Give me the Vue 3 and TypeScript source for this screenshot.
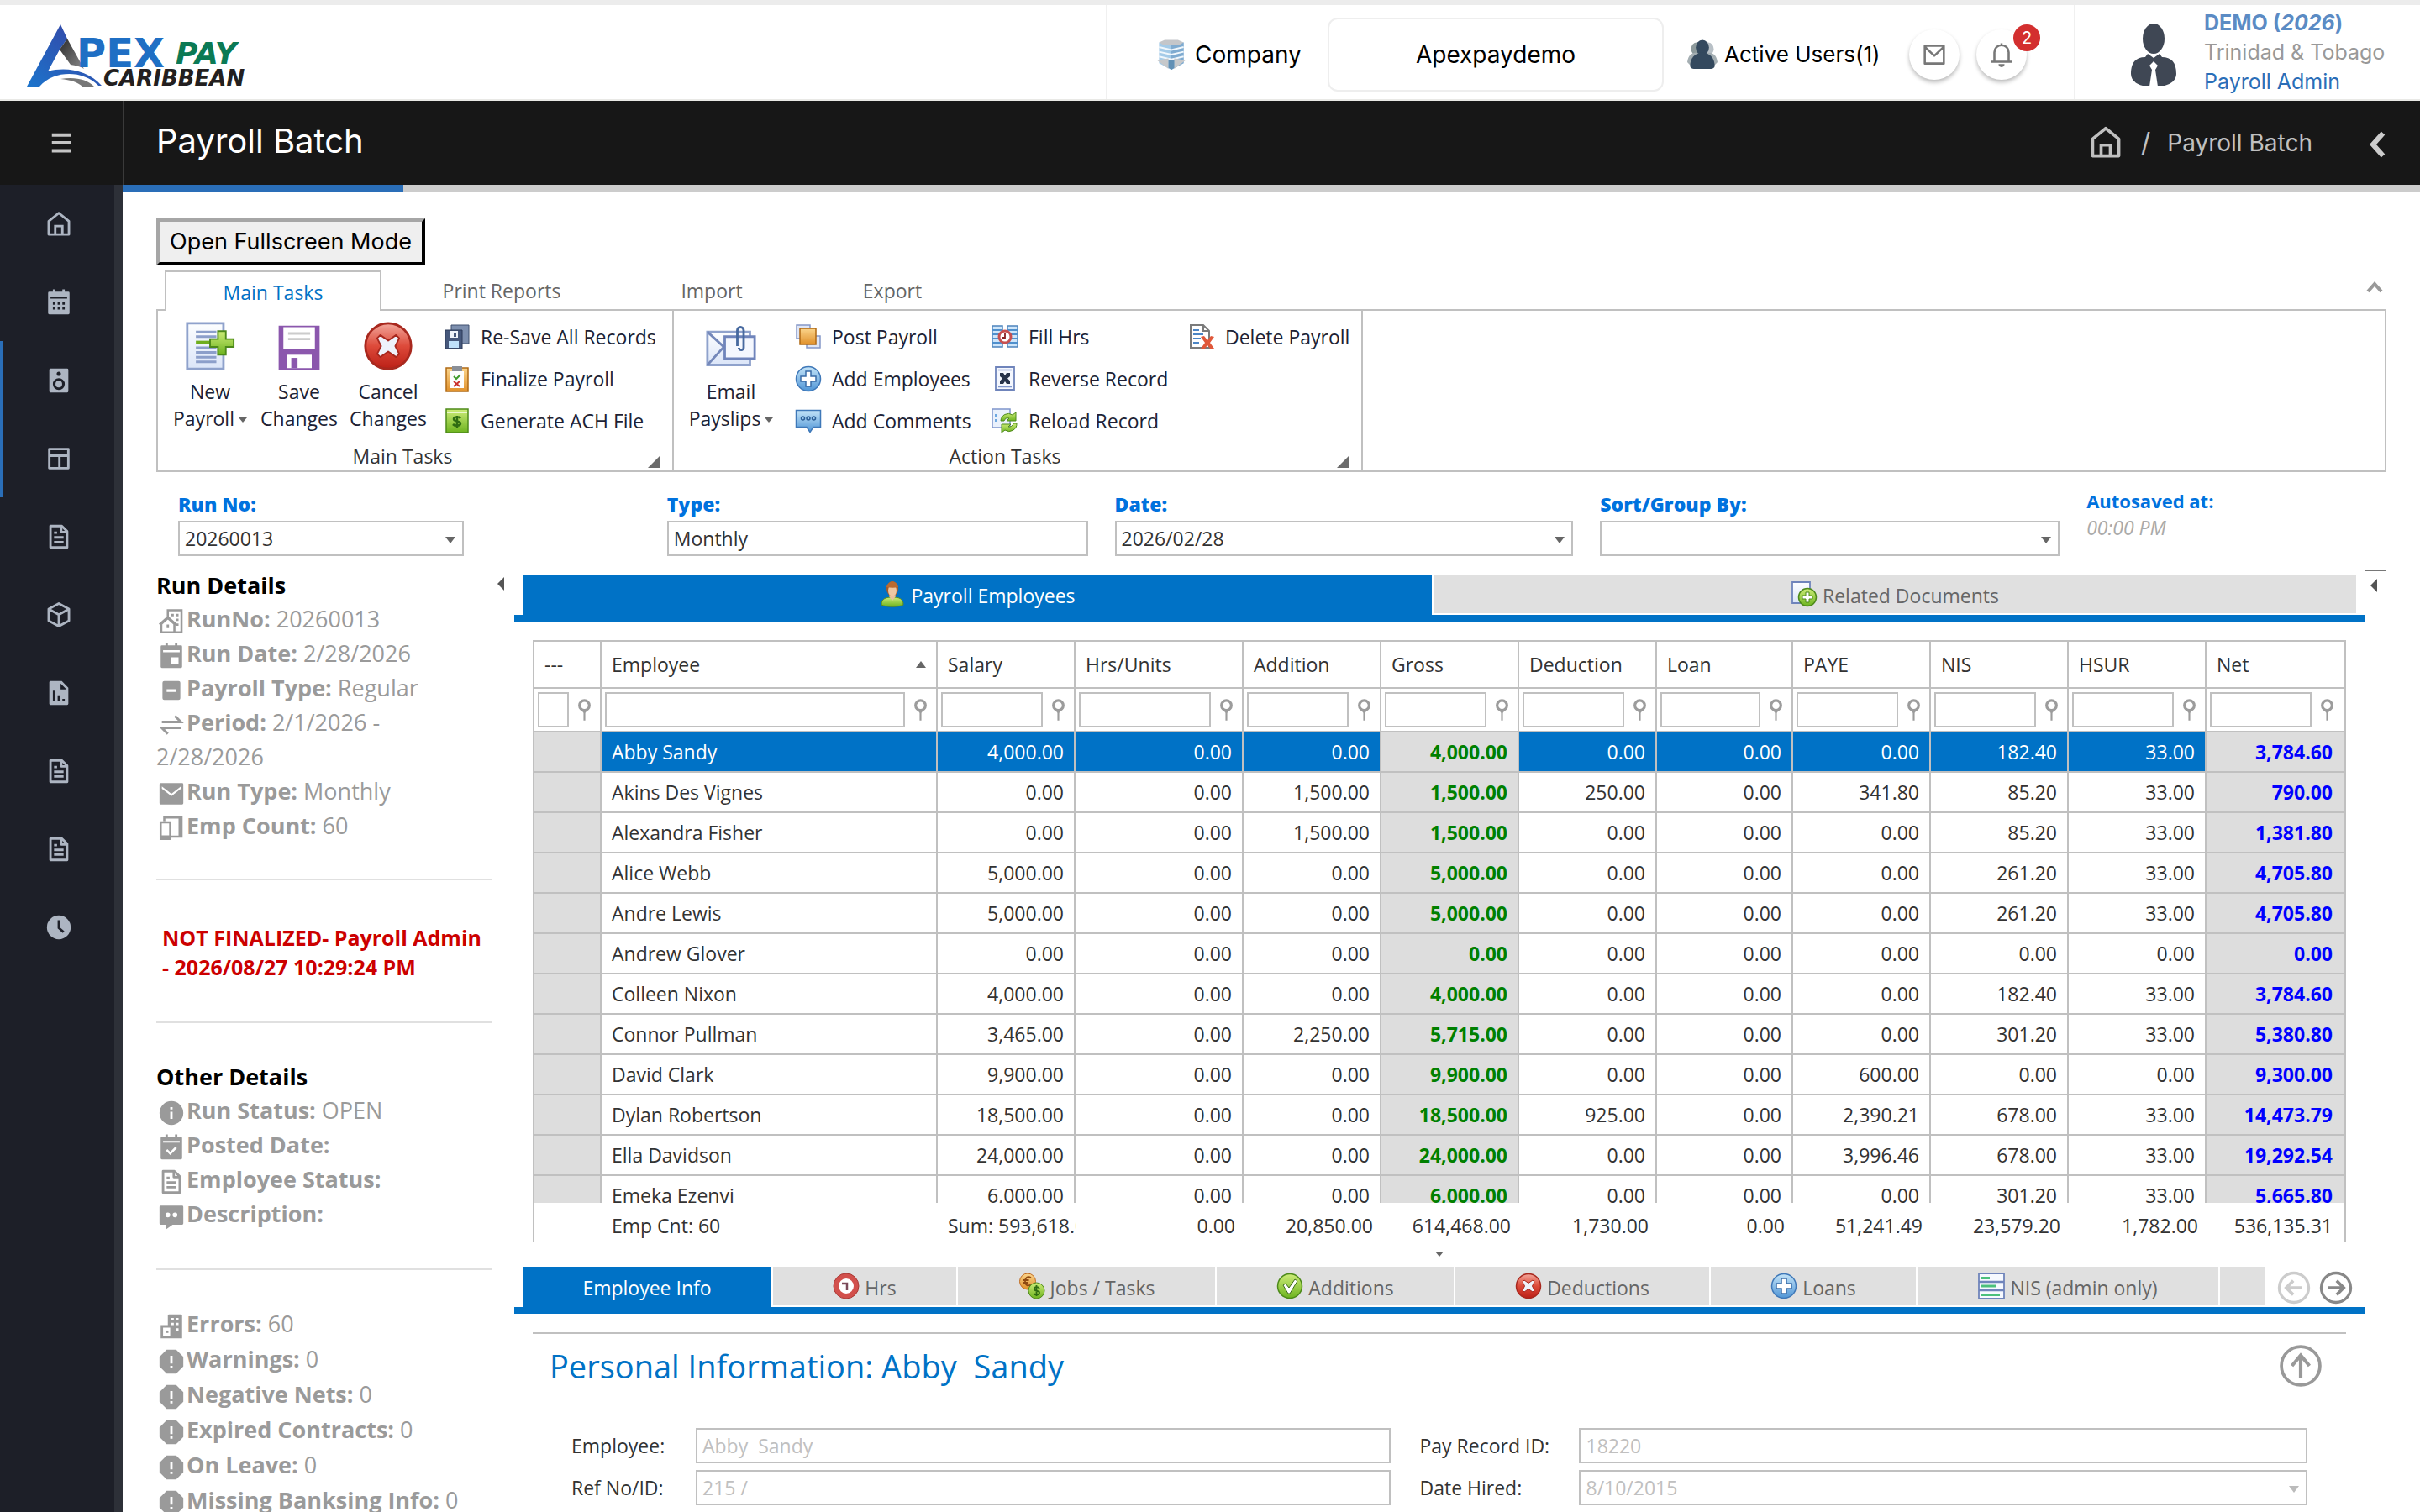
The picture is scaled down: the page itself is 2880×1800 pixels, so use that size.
<script setup lang="ts">
import { ref } from 'vue'

// Monochrome glyphs, drawn on a 24-unit grid
const glyphs: Record<string, string> = {
  home: '<path d="M3.5 9.5 12 2.6l8.500 6.900V20.500h-17z" fill="none" stroke="currentColor" stroke-width="2" stroke-linejoin="round"/><path d="M9 20.500V13.500h6v7" fill="none" stroke="currentColor" stroke-width="2"/>',
  calendar: '<path fill-rule="evenodd" fill="currentColor" d="M7 1h2v2h6V1h2v2h3a1 1 0 0 1 1 1v17a1 1 0 0 1-1 1H4a1 1 0 0 1-1-1V4a1 1 0 0 1 1-1h3zM5 7v1.800h14V7zM7 12v2h2v-2zm4 0v2h2v-2zm4 0v2h2v-2zM7 16v2h2v-2zm4 0v2h2v-2zm4 0v2h2v-2z"/>',
  speaker: '<path fill-rule="evenodd" fill="currentColor" d="M5 2h14a1 1 0 0 1 1 1v18a1 1 0 0 1-1 1H5a1 1 0 0 1-1-1V3a1 1 0 0 1 1-1zm7 8a5 5 0 1 0 0 10 5 5 0 0 0 0-10zm0 2.200a2.800 2.800 0 1 1 0 5.600 2.800 2.800 0 0 1 0-5.600zM12 4.500a1.800 1.800 0 1 0 0 3.600 1.800 1.800 0 0 0 0-3.600z"/>',
  layout: '<path d="M4 4h16v16H4zM4 9.500h16M12.500 9.500V20" fill="none" stroke="currentColor" stroke-width="2" stroke-linejoin="round"/>',
  file: '<path d="M5 3h9.500L19 7.500V21H5zM14 3v5h5M8 12.500h8M8 16.500h8M8 8.500h2.500" fill="none" stroke="currentColor" stroke-width="2" stroke-linejoin="round"/>',
  box: '<path d="M12 2.500 20.500 7v10L12 21.500 3.500 17V7zM3.500 7l8.500 4.800L20.500 7M12 11.800v9.700" fill="none" stroke="currentColor" stroke-width="2" stroke-linejoin="round"/>',
  chart: '<path fill-rule="evenodd" fill="currentColor" d="M5 2h9.500L20 7.500V21a1 1 0 0 1-1 1H5a1 1 0 0 1-1-1V3a1 1 0 0 1 1-1zm8.500 2v5h5zM7 10v9h2v-9zm4 4v5h2v-5zm4 3v2h2v-2z"/>',
  clock: '<circle cx="12" cy="12" r="10" fill="currentColor"/><path d="M12 6v6.500l4 3.500" fill="none" stroke="#1d1f28" stroke-width="2"/>',
  building: '<path d="M9 8V2.500h11.500v18.500H3.500v-7L9 9l5.500 5v7M2 14.500 9 8.200l7 6.300" fill="none" stroke="currentColor" stroke-width="1.800"/><path d="M12 5.500h2v2h-2zm4 0h2v2h-2zm0 4h2v2h-2zm0 4h2v2h-2zM8 14.500h2v3H8z" fill="currentColor"/>',
  date: '<path fill-rule="evenodd" fill="currentColor" d="M7 1h2v2h6V1h2v2h3a1 1 0 0 1 1 1v17a1 1 0 0 1-1 1H4a1 1 0 0 1-1-1V4a1 1 0 0 1 1-1h3zM5 7v1.800h14V7zM12 13v6h6v-6z"/>',
  minus: '<path fill-rule="evenodd" fill="currentColor" d="M6 4h12a1.500 1.500 0 0 1 1.500 1.500v13A1.500 1.500 0 0 1 18 20H6a1.500 1.500 0 0 1-1.500-1.500v-13A1.500 1.500 0 0 1 6 4zm2 7v2.200h8V11z"/>',
  swap: '<path d="M4 9.500h16l-5-5M20 14.500H4l5 5" fill="none" stroke="currentColor" stroke-width="2"/>',
  mail: '<path fill-rule="evenodd" fill="currentColor" d="M3 3h18a1 1 0 0 1 1 1v16a1 1 0 0 1-1 1H3a1 1 0 0 1-1-1V4a1 1 0 0 1 1-1zm1 2.800v2L12 14l8-6.200v-2L12 12z"/>',
  devices: '<path d="M6 6V3h14.500v16H12M3 7h8v14H3z" fill="none" stroke="currentColor" stroke-width="1.800"/><path d="M18 3h3v16h-3zM3 18h8v3H3z" fill="currentColor"/>',
  info: '<path fill-rule="evenodd" fill="currentColor" d="M12 2a10 10 0 1 0 0 20 10 10 0 0 0 0-20zm-1 5h2v2h-2zm0 4h2v6h-2z"/>',
  check: '<path fill-rule="evenodd" fill="currentColor" d="M7 1h2v2h6V1h2v2h3a1 1 0 0 1 1 1v17a1 1 0 0 1-1 1H4a1 1 0 0 1-1-1V4a1 1 0 0 1 1-1h3zM5 6.500V8h14V6.500z"/><path d="m8 14 3 3 5-5" fill="none" stroke="#fff" stroke-width="1.800"/>',
  chat: '<path fill-rule="evenodd" fill="currentColor" d="M3 3h18a1 1 0 0 1 1 1v14a1 1 0 0 1-1 1h-8l-5.500 4V19H3a1 1 0 0 1-1-1V4a1 1 0 0 1 1-1zm6 5.800a2 2 0 1 0 0 4 2 2 0 0 0 0-4zm6 0a2 2 0 1 0 0 4 2 2 0 0 0 0-4z"/>',
  offices: '<path fill-rule="evenodd" fill="currentColor" d="M10 2h10a1 1 0 0 1 1 1v19H3V11h6V3a1 1 0 0 1 1-1zM5 13v7h6v-7zm7-8v2h2V5zm4 0v2h2V5zm-4 4v2h2V9zm4 0v2h2V9zm0 4.500v2h2v-2z"/><path d="M7.500 15.500h2v2h-2z" fill="currentColor"/>',
  alert: '<path fill-rule="evenodd" fill="currentColor" d="M8 2h8l6 6v8l-6 6H8l-6-6V8zm3 5v6.500h2V7zm0 8.500v2h2v-2z"/>',
  envelope: '<path d="M4 4.500h16v15H4zM4 5.500l8 7.500 8-7.500" fill="none" stroke="currentColor" stroke-width="1.800" stroke-linejoin="round"/>',
  bell: '<path d="M6 17.500V10a6 6 0 0 1 12 0v7.500M3.500 18h17M12 2.500V4" fill="none" stroke="currentColor" stroke-width="1.800"/><path d="M9.500 20h5a2.500 2.500 0 0 1-5 0z" fill="currentColor"/>',
  menu: '<path d="M3 4.500h18M3 12h18M3 19.500h18" stroke="currentColor" stroke-width="3.200"/>',
  left: '<path d="M16 3 8 12l8 9" fill="none" stroke="currentColor" stroke-width="4"/>',
  up: '<path d="m4 17 8-9 8 9" fill="none" stroke="currentColor" stroke-width="4"/>',
  pin: '<circle cx="12" cy="7" r="5.500" fill="#fff" stroke="#9c9c9c" stroke-width="3"/><path d="M8 11.500h8l-3 4V24h-2v-8.500z" fill="#9c9c9c"/>',
  arrowLeft: '<circle cx="12" cy="12" r="10.500" fill="none" stroke="currentColor" stroke-width="2"/><path d="M18 12H7m4.500-5L6.500 12l5 5" fill="none" stroke="currentColor" stroke-width="2.200"/>',
  arrowRight: '<circle cx="12" cy="12" r="10.500" fill="none" stroke="currentColor" stroke-width="2"/><path d="M6 12h11m-4.500-5 5 5-5 5" fill="none" stroke="currentColor" stroke-width="2.200"/>',
  arrowUp: '<circle cx="12" cy="12" r="11" fill="none" stroke="currentColor" stroke-width="1.800"/><path d="M12 19V6m-5 6 5-6 5 6" fill="none" stroke="currentColor" stroke-width="2"/>',
  corner: '<path d="M24 0v24H0z" fill="#6b6b6b"/>',
}

const ball = (fill: string, edge: string) =>
  `<circle cx="16" cy="16" r="14.500" fill="url(#${fill})" stroke="${edge}" stroke-width="1.500"/>`
const cross = 'M11 9l5 3.500L21 9l2 2-2.500 5 2.500 5-2 2-5-3.500L11 23l-2-2 2.500-5L9 11z'
const plus = 'M13 7h6v6h6v6h-6v6h-6v-6H7v-6h6z'

// Coloured pictograms, drawn on a 32-unit grid
const pictos: Record<string, string> = {
  newDoc: '<path d="M1.500 1.500h23v29h-23z" fill="url(#paper)" stroke="#8fa2cc" stroke-width="1.500"/><path d="M7 7h13M7 10h13M7 17h13M7 20h13M7 23h13M7 26h13" stroke="#8c9fca" stroke-width="1.600"/><path d="M7 13.500h10" stroke="#6fae1e" stroke-width="1.800"/><path d="M21 6.500h5v5h5v5h-5v5h-5v-5h-5v-5h5z" fill="url(#green)" stroke="#4d8a1a"/>',
  floppy: '<path d="M3 3h26v28H3z" fill="#8b57ad"/><path d="M6 4h20v14H6z" fill="#fff"/><path d="M9 8h14M9 11.500h14" stroke="#ccc" stroke-width="1.500"/><path d="M8 21.500h16V30H8z" fill="#fff"/><path d="M11 23.500h4V30h-4z" fill="#8b57ad"/>',
  cancel: ball('red', '#a8281e') + `<path d="${cross}" fill="#eef2fb" stroke="#a8281e" stroke-linejoin="round"/>`,
  plus: ball('blue', '#3f78b8') + `<path d="${plus}" fill="#fff" stroke="#3a6ca8" stroke-width="1.500"/>`,
  tick: ball('green', '#4d8a1a') + '<path d="m8 15 3-2 4 5 7-10 3 2-9 15h-2z" fill="#fff" stroke="#3d6b1a"/>',
  saveAll: '<path d="M9 2h21v22H9z" fill="#7d8fae" stroke="#41506f"/><path d="M2 8h20v22H2z" fill="#46587c" stroke="#2c3a58"/><path d="M7 9h10v8H7z" fill="#eef3fb"/><path d="M6 21h12v8H6z" fill="#bfe0fa"/><path d="M12 12h3v4h-3z" fill="#46587c"/>',
  clipboard: '<path d="M3 3h26v28H3z" fill="url(#orange)" stroke="#b06a14" stroke-width="1.500"/><path d="M8 7h16v20H8z" fill="#fdfdfd"/><path d="M10 1h12v6H10z" fill="#8a8f98"/><path d="m12 13 3 3 5-5" fill="none" stroke="#3f9a2a" stroke-width="2"/><path d="m12 19 7 6m0-6-7 6" stroke="#c9302c" stroke-width="2"/>',
  money: '<path d="M3 2h26v28H3z" fill="url(#green)" stroke="#4d8a1a" stroke-width="1.500"/><path d="M4 5h24v2H4z" fill="#eaf7cd"/><path d="M20 13c-2-3-8-2-8 1s8 2 8 5-6 4-9 1M16 10v15" fill="none" stroke="#2f6b12" stroke-width="2.500"/>',
  mailClip: '<path d="M1 7h27v21H1z" fill="url(#paper)" stroke="#8fa2cc" stroke-width="1.500"/><path d="m1 7 11 10M1 28l10-11" fill="none" stroke="#7488ba" stroke-width="1.500"/><path d="M12 10h19v14H12z" fill="#f4f7fe" stroke="#6f84bb" stroke-width="1.500"/><path d="M20 16V6a2 2 0 0 1 4 0v11a1.500 1.500 0 0 1-3 0" fill="none" stroke="#47699f" stroke-width="1.500"/>',
  post: '<path d="M2 2h16v16H2z" fill="#dfe6f6" stroke="#8598c8" stroke-width="1.500"/><path d="M14 15h16v14H14z" fill="#dfe6f6" stroke="#8598c8" stroke-width="1.500"/><path d="M6 6h19v19H6z" fill="url(#orange)" stroke="#b06a14" stroke-width="1.500"/>',
  comment: '<path d="M1.500 3.500h29v20H22l-4 6-4-6H1.500z" fill="url(#blue)" stroke="#3f78b8" stroke-width="1.500"/><circle cx="9.500" cy="13" r="2" fill="none" stroke="#2b5d96" stroke-width="1.500"/><circle cx="16" cy="13" r="2" fill="none" stroke="#2b5d96" stroke-width="1.500"/><circle cx="22.500" cy="13" r="2" fill="none" stroke="#2b5d96" stroke-width="1.500"/>',
  fill: '<path d="M1 3h12v25H1zM19 3h12v25H19z" fill="#cfe6fa" stroke="#4d84bd" stroke-width="1.500"/><path d="M1 8h12M1 13h12M1 18h12M1 23h12M19 8h12M19 13h12M19 18h12M19 23h12" stroke="#4f90cd" stroke-width="2"/><circle cx="16" cy="16" r="7" fill="#fff" stroke="#c75050" stroke-width="3"/><path d="M16 12v5h-3" fill="none" stroke="#8a2222" stroke-width="1.800"/>',
  reverse: '<path d="M5 2h22v27H5z" fill="#f4f7fe" stroke="#6f84bb" stroke-width="1.800"/><path d="M8 5.500h16M8 25.500h16" stroke="#7f95cb" stroke-width="1.500"/><path d="M10 9h4l2 3 2-3h4v4l-3 2.500 3 3V22h-4l-2-3-2 3h-4v-3.500l3-3-3-2.500z" fill="#26324a"/>',
  reload: '<path d="M1 2h21v22H1z" fill="#eaf1fc" stroke="#7f95cb" stroke-width="1.500"/><path d="M4 8h3v3H4zM4 14h3v3H4z" fill="#6ea8e0"/><path d="M11 16a9 9 0 0 1 14-7l4-3v10H18l3-3a5 5 0 0 0-6 3z" fill="url(#green)" stroke="#4d8a1a"/><path d="M30 19a9 9 0 0 1-14 8l-4 3v-10h11l-3 3a5 5 0 0 0 6-4z" fill="url(#green)" stroke="#4d8a1a"/>',
  deleteDoc: '<path d="M3 2h15l7 7v20H3z" fill="#fff" stroke="#7b7b7b" stroke-width="2"/><path d="M18 2v7h7" fill="none" stroke="#7b7b7b" stroke-width="2"/><path d="M6 8h7M6 13h12M6 18h9M6 23h7" stroke="#4c86c6" stroke-width="2"/><path d="m15 16 4-1 4 5 4-5 4 1-5 7 5 7-4 1-4-5-4 5-4-1 5-7z" fill="#e0583a"/>',
  person: '<path d="M3 29c0-8 6-9 13-9s13 1 13 9c-5 3-21 3-26 0z" fill="url(#green)" stroke="#5d8a1f"/><path d="m12 19 4 5 4-5v-3h-8z" fill="#e8c19c"/><ellipse cx="16" cy="10" rx="7" ry="9" fill="#a35a28"/><ellipse cx="16" cy="12" rx="5" ry="7" fill="#edc7a3"/><path d="M9 8c2-9 12-9 14 0-4 1-9 1-14 0z" fill="#b96a32"/>',
  docAdd: '<path d="M2 2h21v25H2z" fill="url(#paper)" stroke="#6f84bb" stroke-width="1.800"/><circle cx="20" cy="20" r="10.500" fill="url(#green)" stroke="#4d8a1a" stroke-width="1.500"/><path d="M18 14h4v4h4v4h-4v4h-4v-4h-4v-4h4z" fill="#fff" stroke="#4d8a1a"/>',
  hours: '<circle cx="16" cy="16" r="12" fill="#fff" stroke="#d2504c" stroke-width="6"/><circle cx="16" cy="16" r="15" fill="none" stroke="#a83834"/><path d="M11 13h6v8" fill="none" stroke="#7b4b5a" stroke-width="2.500"/>',
  coins: '<circle cx="11" cy="10.500" r="9.500" fill="url(#orange)" stroke="#c06a20"/><path d="M15 6c-4-2-7 0-7 4.500s3 6 7 4M5.500 9h7M5.500 12h6" fill="none" stroke="#8f4a12" stroke-width="1.800"/><circle cx="21.500" cy="21.500" r="9.500" fill="url(#green)" stroke="#4d8a1a"/><path d="M25 19c-2-3-7-2-6 1s6 1 6 4-5 3-7 1M21.500 15v13" fill="none" stroke="#2f6b12" stroke-width="1.800"/>',
  list: '<path d="M1 1h30v30H1z" fill="#f6f9ff" stroke="#6f84bb" stroke-width="1.800"/><path d="M1 11h30M1 21h30" stroke="#6f84bb" stroke-width="2.500"/><path d="M4 5h10v3H4zM4 14.500h17v3H4zM4 25h22v3H4z" fill="#4cc07c"/>',
  tower: '<path d="M3 3h26v22l-13 7-13-7z" fill="#a4cbe8"/><path d="M16 5v27l13-7V3z" fill="#7fabd0"/><path d="m3 3 6-2.500h14L29 3l-5 3H8z" fill="#c4c6c9"/><path d="m3 8 13 3 13-3M3 13l13 3 13-3M3 18l13 3 13-3" fill="none" stroke="#f0f7fc" stroke-width="1.800"/><path d="m1 22 12-2v11zM31 22l-12-2v11z" fill="#c6c8ca"/><path d="M13 22h6v8l-3 2-3-2z" fill="#6190b5"/>',
  users: '<ellipse cx="10" cy="10" rx="6" ry="7" fill="#8d9a9c"/><ellipse cx="22" cy="10" rx="6" ry="7" fill="#b8c0c6"/><path d="M0 24c1-8 5-10 10-10s6 4 6 13H3zM32 24c-1-8-5-10-10-10s-6 4-6 13h13z" fill="#a5afb3"/><ellipse cx="16" cy="8.500" rx="7" ry="8" fill="#34495e"/><path d="M3 28c0-8 5-14 13-14s13 6 13 14c0 2-2 3-4 3H7c-2 0-4-1-4-3z" fill="#34495e"/>',
}

const nav = ['home', 'calendar', 'speaker', 'layout', 'file', 'box', 'chart', 'file', 'file', 'clock']
const navNames = ['Dashboard', 'Calendar', 'Payroll', 'Layouts', 'Documents', 'Items', 'Reports', 'Forms', 'Records', 'Time']

const ribbonTabs = ['Main Tasks', 'Print Reports', 'Import', 'Export']
const mainBig = [
  { icon: 'newDoc', a: 'New', b: 'Payroll', drop: true },
  { icon: 'floppy', a: 'Save', b: 'Changes', drop: false },
  { icon: 'cancel', a: 'Cancel', b: 'Changes', drop: false },
]
const mainSmall = [
  { icon: 'saveAll', text: 'Re-Save All Records' },
  { icon: 'clipboard', text: 'Finalize Payroll' },
  { icon: 'money', text: 'Generate ACH File' },
]
const actionCols = [
  [{ icon: 'post', text: 'Post Payroll' }, { icon: 'plus', text: 'Add Employees' }, { icon: 'comment', text: 'Add Comments' }],
  [{ icon: 'fill', text: 'Fill Hrs' }, { icon: 'reverse', text: 'Reverse Record' }, { icon: 'reload', text: 'Reload Record' }],
  [{ icon: 'deleteDoc', text: 'Delete Payroll' }],
]

const runDetails = [
  { icon: 'building', label: 'RunNo:', value: '20260013' },
  { icon: 'date', label: 'Run Date:', value: '2/28/2026' },
  { icon: 'minus', label: 'Payroll Type:', value: 'Regular' },
  { icon: 'swap', label: 'Period:', value: '2/1/2026 - 2/28/2026' },
  { icon: 'mail', label: 'Run Type:', value: 'Monthly' },
  { icon: 'devices', label: 'Emp Count:', value: '60' },
]
const otherDetails = [
  { icon: 'info', label: 'Run Status:', value: 'OPEN' },
  { icon: 'check', label: 'Posted Date:', value: '' },
  { icon: 'file', label: 'Employee Status:', value: '' },
  { icon: 'chat', label: 'Description:', value: '' },
]
const issues = [
  { icon: 'offices', label: 'Errors:', value: '60' },
  { icon: 'alert', label: 'Warnings:', value: '0' },
  { icon: 'alert', label: 'Negative Nets:', value: '0' },
  { icon: 'alert', label: 'Expired Contracts:', value: '0' },
  { icon: 'alert', label: 'On Leave:', value: '0' },
  { icon: 'alert', label: 'Missing Banksing Info:', value: '0' },
]

const columns = ['---', 'Employee', 'Salary', 'Hrs/Units', 'Addition', 'Gross', 'Deduction', 'Loan', 'PAYE', 'NIS', 'HSUR', 'Net']
const colClass = ['c-mark', '', 'c-num', 'c-hrs', 'c-num', 'c-num', 'c-num', 'c-loan', 'c-num', 'c-num', 'c-num', 'c-num']
const rows = [
  ['Abby Sandy', '4,000.00', '0.00', '0.00', '4,000.00', '0.00', '0.00', '0.00', '182.40', '33.00', '3,784.60'],
  ['Akins Des Vignes', '0.00', '0.00', '1,500.00', '1,500.00', '250.00', '0.00', '341.80', '85.20', '33.00', '790.00'],
  ['Alexandra Fisher', '0.00', '0.00', '1,500.00', '1,500.00', '0.00', '0.00', '0.00', '85.20', '33.00', '1,381.80'],
  ['Alice Webb', '5,000.00', '0.00', '0.00', '5,000.00', '0.00', '0.00', '0.00', '261.20', '33.00', '4,705.80'],
  ['Andre Lewis', '5,000.00', '0.00', '0.00', '5,000.00', '0.00', '0.00', '0.00', '261.20', '33.00', '4,705.80'],
  ['Andrew Glover', '0.00', '0.00', '0.00', '0.00', '0.00', '0.00', '0.00', '0.00', '0.00', '0.00'],
  ['Colleen Nixon', '4,000.00', '0.00', '0.00', '4,000.00', '0.00', '0.00', '0.00', '182.40', '33.00', '3,784.60'],
  ['Connor Pullman', '3,465.00', '0.00', '2,250.00', '5,715.00', '0.00', '0.00', '0.00', '301.20', '33.00', '5,380.80'],
  ['David Clark', '9,900.00', '0.00', '0.00', '9,900.00', '0.00', '0.00', '600.00', '0.00', '0.00', '9,300.00'],
  ['Dylan Robertson', '18,500.00', '0.00', '0.00', '18,500.00', '925.00', '0.00', '2,390.21', '678.00', '33.00', '14,473.79'],
  ['Ella Davidson', '24,000.00', '0.00', '0.00', '24,000.00', '0.00', '0.00', '3,996.46', '678.00', '33.00', '19,292.54'],
  ['Emeka Ezenvi', '6,000.00', '0.00', '0.00', '6,000.00', '0.00', '0.00', '0.00', '301.20', '33.00', '5,665.80'],
]
const totals = ['', 'Emp Cnt: 60', 'Sum: 593,618.00', '0.00', '20,850.00', '614,468.00', '1,730.00', '0.00', '51,241.49', '23,579.20', '1,782.00', '536,135.31']

const detailTabs = [
  { text: 'Employee Info', icon: '', size: 296 },
  { text: 'Hrs', icon: 'hours', size: 218 },
  { text: 'Jobs / Tasks', icon: 'coins', size: 306 },
  { text: 'Additions', icon: 'tick', size: 282 },
  { text: 'Deductions', icon: 'cancel', size: 302 },
  { text: 'Loans', icon: 'plus', size: 244 },
  { text: 'NIS (admin only)', icon: 'list', size: 358 },
  { text: '', icon: '', size: 54 },
]

const selected = ref(0)
const runNo = ref('20260013')
const payDate = ref('2026/02/28')
</script>

<template>
  <div class="app">
    <svg class="defs" width="0" height="0" aria-hidden="true">
      <defs>
        <linearGradient id="red" x1="0" y1="0" x2="0" y2="1"><stop offset="0" stop-color="#f2a79b" /><stop offset=".5" stop-color="#dd4a3a" /><stop offset="1" stop-color="#bb1f16" /></linearGradient>
        <linearGradient id="blue" x1="0" y1="0" x2="0" y2="1"><stop offset="0" stop-color="#c4e4f8" /><stop offset="1" stop-color="#4f95d6" /></linearGradient>
        <linearGradient id="green" x1="0" y1="0" x2="0" y2="1"><stop offset="0" stop-color="#cdec78" /><stop offset="1" stop-color="#6db31f" /></linearGradient>
        <linearGradient id="orange" x1="0" y1="0" x2="0" y2="1"><stop offset="0" stop-color="#fbd58c" /><stop offset="1" stop-color="#e0902a" /></linearGradient>
        <linearGradient id="paper" x1="0" y1="0" x2="0" y2="1"><stop offset="0" stop-color="#fdfeff" /><stop offset="1" stop-color="#dbe5f8" /></linearGradient>
        <linearGradient id="apex" x1="0" y1="1" x2="1" y2="0"><stop offset="0" stop-color="#1b74cc" /><stop offset="1" stop-color="#3a3fa0" /></linearGradient>
        <linearGradient id="steel" x1="0" y1="0" x2="1" y2="1"><stop offset="0" stop-color="#2b2b2b" /><stop offset="1" stop-color="#8a8a8a" /></linearGradient>
      </defs>
    </svg>

    <header class="top">
      <svg class="logo" viewBox="0 0 270 80" role="img" aria-label="Apex Pay Caribbean">
        <path d="M40 5 48 22 39 35 25 61c22-6 48-1 64 17-4 0-4 0-5-1C68 61 34 58 15 79H0z" fill="url(#apex)" />
        <path d="M48 22 68 58c-5-3-10-4-16-5L39 35z" fill="url(#steel)" />
        <path d="M40 70c16-3 32 0 40 9H66c-5-5-14-8-26-9z" fill="#777" />
        <text x="59" y="56" class="logo-a">PEX</text>
        <text x="177" y="52" class="logo-b">PAY</text>
        <text x="91" y="78" class="logo-c">CARIBBEAN</text>
      </svg>
      <div class="company">
        <svg class="ic36" viewBox="0 0 32 32" v-html="pictos.tower" />
        <span>Company</span>
      </div>
      <button class="tenant" type="button">Apexpaydemo</button>
      <div class="active-users">
        <svg class="ic36" viewBox="0 0 32 32" v-html="pictos.users" />
        <span>Active Users(1)</span>
      </div>
      <button class="round" type="button" aria-label="Messages"><svg viewBox="0 0 24 24" v-html="glyphs.envelope" /></button>
      <button class="round" type="button" aria-label="Notifications">
        <svg viewBox="0 0 24 24" v-html="glyphs.bell" />
        <span class="badge">2</span>
      </button>
      <div class="profile">
        <svg class="avatar" viewBox="0 0 72 80" aria-hidden="true">
          <ellipse cx="36" cy="22" rx="13" ry="18" fill="#3f4754" />
          <path d="M9 64c0-14 6-20 17-20l3-4 7 5 7-5 3 4c11 0 17 6 17 20 0 7-6 12-14 14H23C15 76 9 71 9 64z" fill="#3f4754" />
          <path d="m36 49 5 5-3 5 3 20H31l3-20-3-5z" fill="#fff" />
        </svg>
        <div class="who">
          <strong>DEMO (<em>2026</em>)</strong>
          <span>Trinidad &amp; Tobago</span>
          <a href="#profile">Payroll Admin</a>
        </div>
      </div>
    </header>

    <div class="bar">
      <button class="burger" type="button" aria-label="Toggle menu"><svg viewBox="0 0 24 24" v-html="glyphs.menu" /></button>
      <h1>Payroll Batch</h1>
      <nav class="crumbs" aria-label="Breadcrumb">
        <a href="#home" aria-label="Home"><svg viewBox="0 0 24 24" v-html="glyphs.home" /></a>
        <span class="slash">/</span>
        <span class="here">Payroll Batch</span>
      </nav>
      <button class="back" type="button" aria-label="Back"><svg viewBox="0 0 24 24" v-html="glyphs.left" /></button>
    </div>

    <div class="shell">
      <nav class="side" aria-label="Main">
        <a v-for="(n, i) in nav" :key="i" href="#nav" :aria-label="navNames[i]" :class="{ marked: i === 2 || i === 3 }">
          <svg viewBox="0 0 24 24" v-html="glyphs[n]" />
        </a>
      </nav>

      <main class="page">
        <div class="progress"><div class="done"></div></div>
        <button class="fullscreen" type="button">Open Fullscreen Mode</button>

        <section class="ribbon">
          <div class="rtabs">
            <button v-for="(t, i) in ribbonTabs" :key="t" type="button" :class="['rtab', 'rtab' + i, { on: i === 0 }]">{{ t }}</button>
            <svg class="fold" viewBox="0 0 24 24" v-html="glyphs.up" />
          </div>
          <div class="rpanel">
            <div class="rgroup g-main">
              <div class="ritems">
                <button v-for="b in mainBig" :key="b.icon" class="big" type="button">
                  <svg viewBox="0 0 32 32" v-html="pictos[b.icon]" />
                  <span>{{ b.a }}</span>
                  <span>{{ b.b }}<i v-if="b.drop" class="tri"></i></span>
                </button>
                <div class="rcol">
                  <button v-for="s in mainSmall" :key="s.icon" class="small" type="button">
                    <svg viewBox="0 0 32 32" v-html="pictos[s.icon]" />{{ s.text }}
                  </button>
                </div>
              </div>
              <div class="rtitle">Main Tasks<svg viewBox="0 0 24 24" v-html="glyphs.corner" /></div>
            </div>
            <div class="rgroup g-action">
              <div class="ritems">
                <button class="big" type="button">
                  <svg viewBox="0 0 32 32" v-html="pictos.mailClip" />
                  <span>Email</span>
                  <span>Payslips<i class="tri"></i></span>
                </button>
                <div v-for="(c, i) in actionCols" :key="i" class="rcol">
                  <button v-for="s in c" :key="s.icon" class="small" type="button">
                    <svg viewBox="0 0 32 32" v-html="pictos[s.icon]" />{{ s.text }}
                  </button>
                </div>
              </div>
              <div class="rtitle">Action Tasks<svg viewBox="0 0 24 24" v-html="glyphs.corner" /></div>
            </div>
          </div>
        </section>

        <form class="filters" @submit.prevent>
          <div class="field run">
            <label for="run">Run No:</label>
            <div class="pick"><select id="run" v-model="runNo"><option>20260013</option></select></div>
          </div>
          <div class="field">
            <label for="type">Type:</label>
            <input id="type" value="Monthly" />
          </div>
          <div class="field">
            <label for="date">Date:</label>
            <div class="pick"><select id="date" v-model="payDate"><option>2026/02/28</option></select></div>
          </div>
          <div class="field">
            <label for="sort">Sort/Group By:</label>
            <div class="pick"><select id="sort"><option></option></select></div>
          </div>
          <div class="saved"><strong>Autosaved at:</strong><em>00:00 PM</em></div>
        </form>

        <div class="work">
          <aside class="details">
            <h2>Run Details</h2>
            <p v-for="d in runDetails" :key="d.label"><svg viewBox="0 0 24 24" v-html="glyphs[d.icon]" /><b>{{ d.label }}</b> {{ d.value }}</p>
            <hr />
            <div class="warn">NOT FINALIZED- Payroll Admin - 2026/08/27 10:29:24 PM</div>
            <hr />
            <h2>Other Details</h2>
            <p v-for="d in otherDetails" :key="d.label"><svg viewBox="0 0 24 24" v-html="glyphs[d.icon]" /><b>{{ d.label }}</b> {{ d.value }}</p>
            <hr class="last" />
            <div class="issues">
              <p v-for="d in issues" :key="d.label"><svg viewBox="0 0 24 24" v-html="glyphs[d.icon]" /><b>{{ d.label }}</b> {{ d.value }}</p>
            </div>
          </aside>
          <div class="split"><i class="tri-left"></i></div>

          <section class="main">
            <div class="tabs wide">
              <button type="button" class="tab on"><svg viewBox="0 0 32 32" v-html="pictos.person" />Payroll Employees</button>
              <button type="button" class="tab"><svg viewBox="0 0 32 32" v-html="pictos.docAdd" />Related Documents</button>
            </div>

            <div class="grid">
              <table>
                <colgroup><col v-for="(c, i) in colClass" :key="i" :class="c" /></colgroup>
                <thead>
                  <tr class="heads">
                    <th v-for="(c, i) in columns" :key="c" scope="col"><div><span>{{ c }}</span><i v-if="i === 1" class="tri-up"></i></div></th>
                  </tr>
                  <tr class="find">
                    <td v-for="c in columns" :key="c"><div><input :aria-label="'Filter ' + c" /><svg viewBox="4 0 16 24" v-html="glyphs.pin" /></div></td>
                  </tr>
                </thead>
              </table>
              <div class="scroll">
                <table>
                  <colgroup><col v-for="(c, i) in colClass" :key="i" :class="c" /></colgroup>
                  <tbody>
                    <tr v-for="(r, i) in rows" :key="r[0]" :class="{ sel: i === selected }" @click="selected = i">
                      <td class="mark"></td>
                      <td v-for="(v, j) in r" :key="j" :class="{ name: j === 0, gross: j === 4, net: j === 10 }">{{ v }}</td>
                    </tr>
                  </tbody>
                </table>
              </div>
              <table class="sums">
                <colgroup><col v-for="(c, i) in colClass" :key="i" :class="c" /></colgroup>
                <tbody>
                  <tr><td v-for="(v, i) in totals" :key="i" :class="{ name: i < 3 }">{{ v }}</td></tr>
                </tbody>
              </table>
            </div>
            <div class="hsplit"><i class="tri"></i></div>

            <div class="tabs">
              <button v-for="(t, i) in detailTabs" :key="i" type="button" :class="['tab', { on: i === 0 }]" :style="{ width: t.size + 'px' }" :aria-label="t.text || 'More'">
                <svg v-if="t.icon" viewBox="0 0 32 32" v-html="pictos[t.icon]" />{{ t.text }}
              </button>
              <div class="scrollers">
                <button type="button" class="dim" aria-label="Previous tabs"><svg viewBox="0 0 24 24" v-html="glyphs.arrowLeft" /></button>
                <button type="button" aria-label="Next tabs"><svg viewBox="0 0 24 24" v-html="glyphs.arrowRight" /></button>
              </div>
            </div>

            <section class="person">
              <div class="ptitle">
                <h2>Personal Information: Abby&nbsp; Sandy</h2>
                <button type="button" aria-label="Collapse"><svg viewBox="0 0 24 24" v-html="glyphs.arrowUp" /></button>
              </div>
              <div class="pform">
                <label for="emp">Employee:</label>
                <input id="emp" value="Abby  Sandy" disabled />
                <label for="rec" class="second">Pay Record ID:</label>
                <input id="rec" value="18220" disabled />
                <label for="refno">Ref No/ID:</label>
                <input id="refno" value="215 /" disabled />
                <label for="hired" class="second">Date Hired:</label>
                <div class="pick dim"><select id="hired" disabled><option>8/10/2015</option></select></div>
              </div>
            </section>
          </section>
          <div class="split right"><i class="tri-left"></i></div>
        </div>
      </main>
    </div>
  </div>
</template>

<style>
body { background: #fff; }
</style>

<style scoped>
* { box-sizing: border-box; }
.app { display: flex; flex-direction: column; height: 100vh; overflow: hidden; font-family: "Open Sans", "Noto Sans", sans-serif; font-size: 23px; line-height: 32px; color: #333; border-top: 6px solid #ececec; }
.defs { position: absolute; }
button { font: inherit; color: inherit; background: none; border: 0; padding: 0; margin: 0; }
svg { display: block; flex: none; }
h1, h2, p { margin: 0; font-weight: 400; }
a { color: inherit; text-decoration: none; }

.top { display: flex; align-items: center; height: 114px; padding-top: 6px; border-bottom: 2px solid #e9e9e6; font-family: Inter, sans-serif; font-size: 26px; color: #000; flex: none; }
.logo { width: 270px; height: 80px; margin: 0 auto 2px 32px; overflow: visible; }
.logo text { font-family: "DejaVu Sans", sans-serif; font-weight: 700; }
.logo .logo-a { font-size: 48px; fill: #1f6fc4; }
.logo .logo-b { font-size: 36px; font-style: italic; fill: #0b7a55; }
.logo .logo-c { font-size: 26px; font-style: italic; fill: #231f20; }
.company { display: flex; align-items: center; align-self: stretch; gap: 10px; width: 264px; margin-top: -6px; padding: 6px 0 0 58px; border-left: 2px solid #f0f0f0; font-size: 28px; }
.ic36 { width: 36px; height: 36px; }
.tenant { width: 400px; height: 88px; border: 2px solid #eee; border-radius: 12px; font-size: 28px; }
.active-users { display: flex; align-items: center; gap: 8px; width: 292px; padding-left: 28px; white-space: nowrap; }
.round { position: relative; display: flex; align-items: center; justify-content: center; width: 60px; height: 60px; margin-right: 20px; border-radius: 50%; box-shadow: 0 3px 5px #bbb; color: #777; }
.round svg { width: 34px; height: 34px; }
.badge { position: absolute; top: -6px; right: -16px; width: 32px; height: 32px; border-radius: 50%; background: #d32f2f; color: #fff; font-size: 20px; line-height: 32px; }
.profile { display: flex; align-items: center; align-self: stretch; gap: 24px; width: 412px; margin-top: -6px; margin-left: 36px; padding-left: 57px; border-left: 2px solid #f0f0f0; }
.avatar { width: 72px; height: 80px; margin-top: 4px; }
.who { display: flex; flex-direction: column; line-height: 35px; font-size: 25px; white-space: nowrap; }
.who strong { color: #5b8bc4; }
.who span { color: #999; }
.who a { color: #2a6eb8; }

.bar { display: flex; align-items: center; height: 100px; background: #171717; color: #fff; font-family: Inter, sans-serif; flex: none; }
.burger { display: flex; align-items: center; justify-content: center; width: 148px; height: 100px; border-right: 2px solid #3a3a3a; color: #c4c4c4; }
.burger svg { width: 36px; height: 30px; }
.bar h1 { margin: 0 auto 4px 38px; font-size: 40px; line-height: 48px; }
.crumbs { display: flex; align-items: center; color: #c0c0c0; font-size: 28px; }
.crumbs svg { width: 44px; height: 44px; }
.slash { margin: 0 20px; font-size: 32px; }
.back { margin: 4px 30px 0 58px; color: #ccc; }
.back svg { width: 40px; height: 36px; }

.shell { display: flex; flex: 1; min-height: 0; }
.side { width: 146px; flex: none; background: #1d1f28; border-right: 10px solid #2d3038; color: #adb5c2; }
.side a { display: flex; align-items: center; justify-content: center; height: 93px; border-left: 4px solid transparent; }
.side a.marked { border-left-color: #2a6eb8; }
.side svg { width: 34px; height: 34px; }

.page { flex: 1; min-width: 0; display: flex; flex-direction: column; padding-left: 40px; }
.progress { height: 8px; margin-left: -40px; background: #ccc; flex: none; }
.done { width: 334px; height: 8px; background: #2a6eb8; }
.fullscreen { align-self: flex-start; width: 320px; height: 56px; margin-top: 32px; border: 4px outset #767676; border-color: #a6a6a6 #555 #555 #a6a6a6; background: #efefef; color: #000; font-family: Inter, sans-serif; font-size: 27px; flex: none; white-space: nowrap; }

.ribbon { margin: 6px 40px 0 0; flex: none; }
.rtabs { display: flex; height: 46px; padding-left: 10px; color: #666; }
.rtab { position: relative; height: 46px; padding: 2px 6px 0; }
.rtab0 { width: 258px; }
.rtab1 { width: 286px; }
.rtab2 { width: 214px; }
.rtab3 { width: 216px; }
.rtab.on { height: 48px; border: 2px solid #c0c0c0; border-bottom: 0; background: #fff; color: #0072c6; z-index: 1; }
.fold { width: 24px; height: 24px; margin: 8px 2px 0 auto; color: #999; }
.rpanel { display: flex; height: 194px; border: 2px solid #c0c0c0; }
.rgroup { position: relative; display: flex; flex-direction: column; flex: none; border-right: 2px solid #c0c0c0; color: #201f35; }
.g-main { width: 614px; }
.g-action { width: 820px; }
.ritems { display: flex; height: 156px; padding: 6px 0 0 10px; }
.g-action .ritems { padding-left: 16px; }
.big { display: flex; flex-direction: column; align-items: center; flex: none; width: 104px; margin-right: 2px; white-space: nowrap; }
.big svg { width: 60px; height: 60px; margin: 6px 0 8px; }
.big .tri { margin-left: 5px; margin-bottom: 4px; }
.rcol { flex: none; margin-left: 12px; }
.g-action .rcol { width: 234px; margin-left: 0; }
.g-action .big { margin-right: 24px; }
.small { display: flex; align-items: center; gap: 12px; height: 50px; white-space: nowrap; }
.small svg { width: 32px; height: 32px; }
.rtitle { padding-right: 30px; text-align: center; line-height: 34px; color: #333; }
.rtitle svg { position: absolute; right: 14px; bottom: 3px; width: 15px; height: 15px; }

.tri, .tri-up, .tri-left { display: inline-block; width: 0; height: 0; border: 5px solid transparent; border-top: 6px solid #666; border-bottom: 0; }
.tri-up { border: 6px solid transparent; border-bottom: 8px solid #666; border-top: 0; }
.tri-left { border: 8px solid transparent; border-right: 8px solid #555; border-left: 0; }

.filters { display: grid; grid-template-columns: 582fr 533fr 578fr 579fr 357fr; margin: 22px 40px 0 26px; flex: none; }
.field { padding-right: 32px; }
.field.run { width: 372px; }
.field label { display: block; height: 36px; color: #0072de; font-weight: 800; font-size: 23px; }
input, select { display: block; width: 100%; height: 42px; margin: 0; padding: 0 6px; border: 2px solid #c0c0c0; border-radius: 0; background: #fff; font: inherit; color: #333; appearance: none; }
.pick { position: relative; }
.pick::after { content: ""; position: absolute; right: 10px; top: 19px; border: 6px solid transparent; border-top: 8px solid #666; border-bottom: 0; pointer-events: none; }
.pick.dim::after { border-top-color: #bbb; }
.saved { display: flex; flex-direction: column; margin-top: -4px; }
.saved strong { color: #0072de; font-size: 22px; }
.saved em { color: #aaa; font-size: 23px; }

.work { display: grid; grid-template-columns: 400px 26px minmax(0, 1fr) 66px; margin-top: 16px; flex: 1; min-height: 0; }
.details { color: #9a9a9a; font-size: 27px; line-height: 41px; }
.details h2 { font-size: 27px; font-weight: 700; line-height: 38px; color: #000; }
.details svg { display: inline-block; width: 34px; height: 34px; margin: 0 1px; vertical-align: -10px; }
.details p { min-height: 41px; padding-right: 12px; line-height: 41px; }
.details hr { height: 2px; margin: 43px 0 51px; border: 0; background: #e0e0e0; }
.warn { padding: 0 0 0 7px; font-size: 25px; font-weight: 700; line-height: 35px; color: #c00; }
.details .warn + hr { margin: 47px 0 45px; }
.details hr.last { margin: 45px 0 43px; }
.issues p { line-height: 42px; }
.split { padding-top: 8px; text-align: right; line-height: 16px; padding-right: 12px; }
.split.right { width: 26px; border-top: 2px solid #777; text-align: left; padding: 8px 0 0 7px; }

.main { min-width: 0; }
.tabs { display: flex; gap: 2px; padding: 0 10px; height: 56px; border-bottom: 8px solid #0072c6; }
.tabs.wide { margin-top: 6px; }
.tab { display: flex; align-items: center; justify-content: center; gap: 6px; height: 46px; padding-top: 4px; background: #e0e0e0; color: #666; white-space: nowrap; flex: none; }
.tab.on { height: 48px; padding-top: 2px; background: #0072c6; color: #fff; }
.tab svg { width: 32px; height: 32px; margin-top: -5px; }
.tabs.wide .tab { flex: 1098 1 0; }
.tabs.wide .tab.on { flex: 1082 1 0; }
.scrollers { display: flex; gap: 10px; margin: 2px 4px 0 auto; color: #888; }
.scrollers svg { width: 40px; height: 40px; }
.scrollers .dim { color: #ccc; }

.grid { margin: 22px 22px 0; border: 2px solid #c0c0c0; border-bottom: 0; }
table { width: 100%; table-layout: fixed; border-collapse: separate; border-spacing: 0; }
.c-mark { width: 80px; }
.c-num { width: 164px; }
.c-hrs { width: 200px; }
.c-loan { width: 162px; }
th, td { height: 48px; padding: 0 12px; border: 0 solid #c0c0c0; border-width: 0 2px 2px 0; text-align: right; font-weight: 400; white-space: nowrap; overflow: hidden; }
th:last-child, td:last-child { border-right: 0; }
td:last-child { padding-right: 14px; }
th { height: 56px; text-align: left; }
th div { display: flex; align-items: center; justify-content: space-between; }
.find td { height: 52px; padding: 0 4px; }
.find div { display: flex; align-items: center; gap: 10px; padding-right: 6px; }
.find td:last-child div { padding-right: 8px; }
.find input { min-width: 0; flex: 1; width: 0; padding: 0; }
.find svg { width: 17px; height: 26px; }
.scroll { height: 560px; overflow: hidden; }
.name { text-align: left; }
td.mark { background: #ddd; }
td.gross, td.net { background: #ddd; font-weight: 700; color: #008000; }
td.net { color: #00f; }
.sel td:not(.mark, .gross, .net) { background: #0072c6; color: #fff; }
.sums td { height: 46px; border: 0; padding: 8px 10px 0 12px; text-overflow: clip; }
.sums td:last-child { padding-right: 14px; }
.sums td:nth-child(3) { padding-right: 0; }
.hsplit { height: 30px; text-align: center; line-height: 18px; }

.person { margin: 22px 22px 0; border-top: 2px solid #c0c0c0; }
.ptitle { display: flex; align-items: center; justify-content: space-between; height: 76px; padding: 0 29px 0 20px; color: #999; }
.ptitle h2 { font-size: 38px; color: #0072c6; white-space: pre; }
.ptitle svg { width: 50px; height: 50px; }
.pform { display: grid; grid-template-columns: 148px 827fr 224px 866fr; gap: 8px 0; align-items: center; padding: 36px 46px 0; }
.pform .second { padding-left: 34px; }
.pform input:disabled, .pform select:disabled { color: #c0c0c0; opacity: 1; white-space: pre; }
</style>
